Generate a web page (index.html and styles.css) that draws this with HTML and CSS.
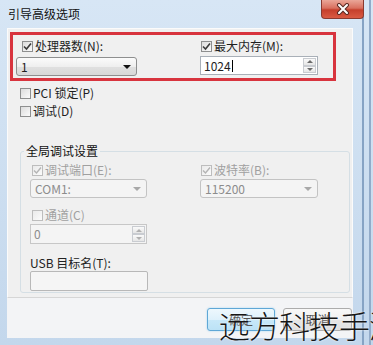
FILE: index.html
```html
<!DOCTYPE html>
<html lang="zh-CN">
<head>
    <meta charset="UTF-8">
    <meta name="viewport" content="width=device-width, initial-scale=1.0">
    <title>引导高级选项</title>
    <link rel="stylesheet" href="styles.css">
</head>
<body>
    <div class="window">
        <!-- Title bar -->
        <div class="titlebar">
            <span class="title">引导高级选项</span>
            <span class="close-btn">
                <svg width="14" height="12" viewBox="0 0 14 12">
                    <path d="M3 2 L11 10 M11 2 L3 10" stroke="#5a2a24" stroke-width="4" stroke-linecap="round"/>
                    <path d="M3 2 L11 10 M11 2 L3 10" stroke="#fff" stroke-width="2" stroke-linecap="round"/>
                </svg>
            </span>
        </div>

        <div class="client">
            <div class="panel">
                <!-- Highlighted section -->
                <div class="highlight">
                    <div class="field field-left">
                        <div class="check-row">
                            <span class="box checked"><svg width="9" height="9" viewBox="0 0 9 9"><path d="M1 4.5 L3.5 7 L8 1.5" fill="none" stroke="#3b3b3b" stroke-width="1.6"/></svg></span>
                            <span class="label">处理器数(N):</span>
                        </div>
                        <div class="combo">
                            <span class="value">1</span>
                            <span class="arrow"></span>
                        </div>
                    </div>
                    <div class="field field-right">
                        <div class="check-row">
                            <span class="box checked"><svg width="9" height="9" viewBox="0 0 9 9"><path d="M1 4.5 L3.5 7 L8 1.5" fill="none" stroke="#3b3b3b" stroke-width="1.6"/></svg></span>
                            <span class="label">最大内存(M):</span>
                        </div>
                        <div class="spin spin-top">
                            <span class="value">1024<span class="caret"></span></span>
                            <span class="spin-btns">
                                <span class="spin-up"></span>
                                <span class="spin-down"></span>
                            </span>
                        </div>
                    </div>
                </div>

                <div class="check-row option">
                    <span class="box"></span>
                    <span class="label">PCI 锁定(P)</span>
                </div>
                <div class="check-row option">
                    <span class="box"></span>
                    <span class="label">调试(D)</span>
                </div>

                <!-- Global debug settings -->
                <div class="group">
                    <div class="group-title">全局调试设置</div>
                    <div class="group-row">
                        <div class="field field-left-sm">
                            <div class="check-row disabled">
                                <span class="box checked"><svg width="9" height="9" viewBox="0 0 9 9"><path d="M1 4.5 L3.5 7 L8 1.5" fill="none" stroke="#b4b4b4" stroke-width="1.4"/></svg></span>
                                <span class="label">调试端口(E):</span>
                            </div>
                            <div class="combo combo-off">
                                <span class="value">COM1:</span>
                                <span class="arrow"></span>
                            </div>
                        </div>
                        <div class="field field-right">
                            <div class="check-row disabled">
                                <span class="box checked"><svg width="9" height="9" viewBox="0 0 9 9"><path d="M1 4.5 L3.5 7 L8 1.5" fill="none" stroke="#b4b4b4" stroke-width="1.4"/></svg></span>
                                <span class="label">波特率(B):</span>
                            </div>
                            <div class="combo combo-off">
                                <span class="value">115200</span>
                                <span class="arrow"></span>
                            </div>
                        </div>
                    </div>

                    <div class="check-row disabled channel">
                        <span class="box"></span>
                        <span class="label">通道(C)</span>
                    </div>
                    <div class="spin spin-off">
                        <span class="value">0</span>
                        <span class="spin-btns">
                            <span class="spin-up"></span>
                            <span class="spin-down"></span>
                        </span>
                    </div>

                    <div class="usb-label">USB 目标名(T):</div>
                    <div class="text-box"></div>
                </div>
            </div>

            <!-- Dialog buttons -->
            <div class="buttons">
                <span class="btn btn-default">确定</span>
                <span class="btn">取消</span>
            </div>
        </div>

        <div class="watermark">远方科技手游</div>
    </div>
</body>
</html>
```

FILE: styles.css
```css
body {
    margin: 0;
    padding: 0;
    font-family: "Noto Sans CJK SC", "Noto Sans", sans-serif;
    font-size: 12px;
    color: #1e1e1e;
}
.window {
    position: relative;
    width: 373px;
    height: 345px;
    overflow: hidden;
    background:
        linear-gradient(to right, transparent 362px, #86a3c4 362px, #86a3c4 364px, transparent 364px, transparent 369px, #92abc9 369px, #92abc9 371px, transparent 371px),
        linear-gradient(#d7e6f5, #c3d7ec);
}
.titlebar {
    height: 28px;
    display: flex;
    align-items: flex-start;
}
.title {
    margin-left: 8px;
    line-height: 27px;
    font-size: 12px;
    color: #111;
}
.close-btn {
    margin-left: auto;
    margin-right: 9px;
    width: 43px;
    height: 19px;
    box-sizing: border-box;
    border: 1px solid #8a3a30;
    border-top: none;
    border-radius: 0 0 4px 4px;
    background: linear-gradient(#eaa698 0%, #d9705f 45%, #c53f2c 55%, #d95a43 100%);
    display: flex;
    align-items: center;
    justify-content: center;
}
.client {
    margin-left: 7px;
    width: 346px;
    height: 310px;
    background-color: #f0f0f0;
    display: flex;
    flex-direction: column;
}
.panel {
    height: 270px;
    box-sizing: border-box;
    border: 1px solid #fbfbfb;
    border-bottom-color: #d6d6d6;
}
.highlight {
    margin: 3px 0 0 2px;
    width: 326px;
    height: 49px;
    box-sizing: border-box;
    border: 3px solid #d8343e;
    padding: 5px 0 0 3px;
    display: flex;
    gap: 63px;
}
.field {
    display: flex;
    flex-direction: column;
}
.field-left {
    width: 121px;
}
.field-left .box {
    margin-left: 6px;
}
.field-right {
    width: 118px;
}
.field-right .box {
    margin-left: 1px;
}
.field-left-sm {
    width: 117px;
}
.field-left-sm .box {
    margin-left: 2px;
}
.check-row {
    height: 12px;
    display: flex;
    align-items: center;
    line-height: 12px;
    white-space: nowrap;
}
.check-row .label {
    margin-left: 2px;
}
.box {
    width: 11px;
    height: 11px;
    box-sizing: border-box;
    border: 1px solid #8e8f8f;
    background: linear-gradient(135deg, #dcdcdc, #fbfbfb);
    display: flex;
    align-items: center;
    justify-content: center;
    flex-shrink: 0;
}
.disabled {
    color: #a0a0a0;
}
.disabled .box {
    border-color: #bdbdbd;
    background: linear-gradient(135deg, #eaeaea, #fbfbfb);
}
.option {
    margin: 6px 0 0 12px;
}
.combo {
    margin-top: 5px;
    height: 19px;
    box-sizing: border-box;
    border: 1px solid #8e8f8f;
    border-radius: 3px;
    background: linear-gradient(#fbfbfb 0%, #efefef 50%, #e0e0e0 51%, #d8d8d8 100%);
    display: flex;
    align-items: center;
    padding: 0 5px 0 4px;
}
.combo .value {
    flex: 1;
    line-height: 12px;
}
.arrow {
    width: 0;
    height: 0;
    border-left: 4px solid transparent;
    border-right: 4px solid transparent;
    border-top: 4px solid #111;
}
.combo-off {
    margin-top: 3px;
    border-color: #c3c3c3;
    background: #f4f4f4;
    color: #8c8c8c;
}
.combo-off .arrow {
    border-top-color: #a8a8a8;
}
.spin {
    height: 19px;
    box-sizing: border-box;
    border: 1px solid #a9b0b8;
    background-color: #fff;
    display: flex;
    align-items: stretch;
}
.spin .value {
    flex: 1;
    display: flex;
    align-items: center;
    padding-left: 3px;
    line-height: 12px;
}
.spin-top {
    margin-top: 4px;
}
.caret {
    width: 1px;
    height: 12px;
    background-color: #000;
    margin-left: 1px;
}
.spin-btns {
    width: 13px;
    margin: 1px 1px 1px 0;
    display: flex;
    flex-direction: column;
}
.spin-up,
.spin-down {
    flex: 1;
    border: 1px solid #c9ccd1;
    background: linear-gradient(#fafafa, #e6e6e6);
    display: flex;
    align-items: center;
    justify-content: center;
}
.spin-up::after,
.spin-down::after {
    content: "";
    border-left: 3px solid transparent;
    border-right: 3px solid transparent;
}
.spin-up::after {
    border-bottom: 3px solid #6b6b6b;
}
.spin-down::after {
    border-top: 3px solid #6b6b6b;
}
.spin-off {
    margin-top: 3px;
    width: 117px;
    height: 20px;
    border-color: #c7c7c7;
    background-color: #f4f4f4;
    color: #8c8c8c;
}
.spin-off .spin-up::after {
    border-bottom-color: #b0b0b0;
}
.spin-off .spin-down::after {
    border-top-color: #b0b0b0;
}
.group {
    margin: 34px 0 0 12px;
    width: 330px;
    height: 142px;
    box-sizing: border-box;
    border: 1px solid #d5dfe5;
    border-radius: 3px;
    padding-left: 9px;
}
.group-title {
    margin: -8px 0 0 -6px;
    padding: 0 2px;
    width: max-content;
    line-height: 14px;
    background-color: #f0f0f0;
    color: #111;
}
.group-row {
    margin-top: 6px;
    display: flex;
    gap: 53px;
}
.channel {
    margin-top: 11px;
}
.channel .box {
    margin-left: 2px;
}
.usb-label {
    margin-top: 13px;
    line-height: 12px;
    color: #222;
}
.text-box {
    margin-top: 2px;
    width: 118px;
    height: 20px;
    box-sizing: border-box;
    border: 1px solid #b8b8b8;
    border-radius: 2px;
    background-color: #f5f5f5;
}
.buttons {
    flex: 1;
    display: flex;
    justify-content: flex-end;
    align-items: flex-start;
    gap: 8px;
    padding: 10px 1px 0 0;
    background-color: #f3f4f6;
}
.btn {
    width: 69px;
    height: 23px;
    box-sizing: border-box;
    border: 1px solid #acacac;
    border-radius: 3px;
    background: linear-gradient(#f8f8f8 0%, #f0f0f0 50%, #e6e6e6 51%, #e0e0e0 100%);
    display: flex;
    align-items: center;
    justify-content: center;
    color: #555;
}
.btn-default {
    width: 68px;
    border-color: #5fa7d6;
    background: linear-gradient(#eef8fd 0%, #def1fb 50%, #c8e8f9 51%, #bce2f6 100%);
    box-shadow: 0 0 2px #9fd4f3;
}
.watermark {
    position: absolute;
    left: 219px;
    top: 309px;
    font-size: 31px;
    line-height: 31px;
    letter-spacing: -1px;
    font-weight: 300;
    color: #161616;
    white-space: nowrap;
    text-shadow: 0 0 2px #fff;
}
```
